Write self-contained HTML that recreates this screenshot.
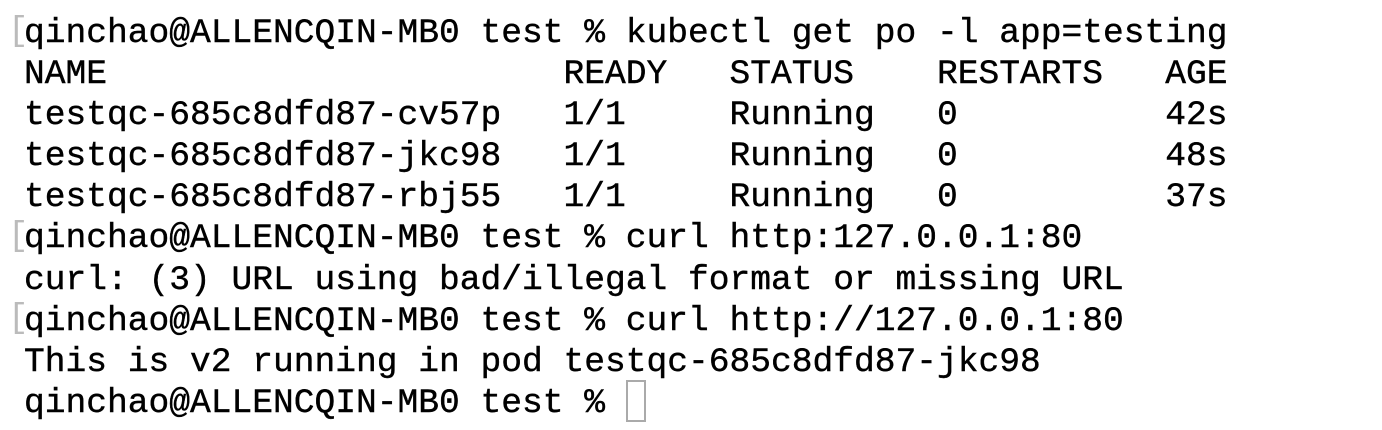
<!DOCTYPE html>
<html><head><meta charset="utf-8"><style>
html,body{margin:0;padding:0;background:#fff;width:1382px;height:430px;overflow:hidden;position:relative}
pre{position:absolute;left:24px;top:13px;margin:0;font-family:"Liberation Mono",monospace;font-size:34.6px;line-height:41.1px;color:#000;letter-spacing:0;-webkit-text-stroke:0.4px #000}
.b{position:absolute;left:8px;font-family:"Liberation Mono",monospace;font-size:34px;color:#bbb}
.cur{position:absolute;left:626px;top:380px;width:20px;height:42px;border:2px solid #aaa;box-sizing:border-box}
</style></head><body>
<div class="b" style="top:13px">[</div>
<div class="b" style="top:218px">[</div>
<div class="b" style="top:300px">[</div>
<pre>qinchao@ALLENCQIN-MB0 test % kubectl get po -l app=testing
NAME                      READY   STATUS    RESTARTS   AGE
testqc-685c8dfd87-cv57p   1/1     Running   0          42s
testqc-685c8dfd87-jkc98   1/1     Running   0          48s
testqc-685c8dfd87-rbj55   1/1     Running   0          37s
qinchao@ALLENCQIN-MB0 test % curl http:127.0.0.1:80
curl: (3) URL using bad/illegal format or missing URL
qinchao@ALLENCQIN-MB0 test % curl http://127.0.0.1:80
This is v2 running in pod testqc-685c8dfd87-jkc98
qinchao@ALLENCQIN-MB0 test % </pre>
<div class="cur"></div>
</body></html>
